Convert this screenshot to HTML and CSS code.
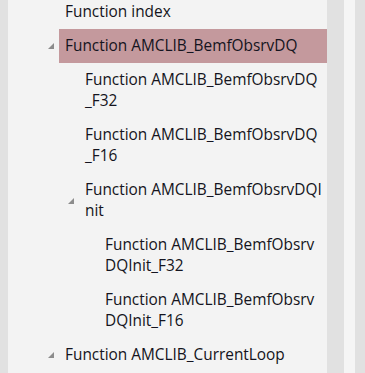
FILE: index.html
```html
<!DOCTYPE html>
<html lang="en">
<head>
    <meta charset="UTF-8">
    <title>Function index</title>
    <link rel="stylesheet" href="styles.css">
</head>
<body>

<div class="frame">
    <div class="tree-panel">
        <ul class="tree">
            <li class="node level-0"><span class="label">Function index</span></li>
            <li class="node level-0 open selected"><span class="label">Function AMCLIB_BemfObsrvDQ</span></li>
            <li class="node level-1"><span class="label">Function AMCLIB_BemfObsrvDQ_F32</span></li>
            <li class="node level-1"><span class="label">Function AMCLIB_BemfObsrvDQ_F16</span></li>
            <li class="node level-1 open"><span class="label">Function AMCLIB_BemfObsrvDQInit</span></li>
            <li class="node level-2"><span class="label">Function AMCLIB_BemfObsrvDQInit_F32</span></li>
            <li class="node level-2"><span class="label">Function AMCLIB_BemfObsrvDQInit_F16</span></li>
            <li class="node level-0 open"><span class="label">Function AMCLIB_CurrentLoop</span></li>
        </ul>
    </div>
    <div class="gutter"></div>
    <div class="strip"></div>
    <div class="gutter-right"></div>
</div>

</body>
</html>
```

FILE: styles.css
```css
body {
    margin: 0;
    background-color: #e1e1e1;
    font-family: "Open Sans", "Noto Sans", sans-serif;
    overflow: hidden;
}

.frame {
    display: flex;
    height: 373px;
    padding-left: 8px;
}

.tree-panel {
    width: 319px;
    background-color: #f3f3f3;
    overflow: hidden;
}

.gutter {
    width: 17px;
    background-color: #e1e1e1;
}

.strip {
    width: 11px;
    background-color: #f5f5f5;
}

.gutter-right {
    flex: 1;
    background-color: #e1e1e1;
}

.tree {
    list-style: none;
    margin: -5px 0 0 0;
    padding: 0;
}

.node {
    position: relative;
    padding: 6px 4px 7px 0;
    font-size: 15.4px;
    line-height: 21px;
    color: #141420;
    word-break: break-all;
}

.level-0 { padding-left: 57px; }
.level-1 { padding-left: 77px; }
.level-2 { padding-left: 97px; }

.label {
    display: block;
}

.selected {
    margin-left: 51px;
    padding-left: 6px;
    background-color: #c4999d;
}

/* expander triangle */
.open::before {
    content: "";
    position: absolute;
    top: 50%;
    margin-top: -3px;
    width: 0;
    height: 0;
    border-left: 6px solid transparent;
    border-bottom: 6px solid #8c8c8c;
}

.level-0.open::before { left: 40px; }
.level-1.open::before { left: 60px; }
.selected.open::before { left: -11px; }
```
